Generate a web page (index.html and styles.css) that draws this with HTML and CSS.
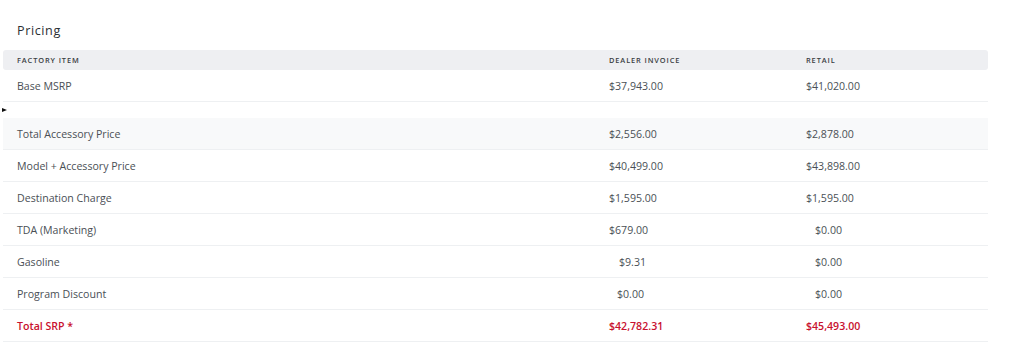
FILE: index.html
```html
<!DOCTYPE html>
<html>
<head>
<meta charset="utf-8">
<link rel="stylesheet" href="styles.css">
</head>
<body>
<section class="pricing">
  <h2 class="title">Pricing</h2>
  <div class="table">
    <div class="row head">
      <div>FACTORY ITEM</div>
      <div>DEALER INVOICE</div>
      <div>RETAIL</div>
    </div>
    <div class="row">
      <div>Base MSRP</div>
      <div>$37,943.00</div>
      <div>$41,020.00</div>
    </div>
    <div class="toggle"><span class="marker"></span></div>
    <div class="row shaded">
      <div>Total Accessory Price</div>
      <div>$2,556.00</div>
      <div>$2,878.00</div>
    </div>
    <div class="row">
      <div>Model + Accessory Price</div>
      <div>$40,499.00</div>
      <div>$43,898.00</div>
    </div>
    <div class="row">
      <div>Destination Charge</div>
      <div>$1,595.00</div>
      <div>$1,595.00</div>
    </div>
    <div class="row">
      <div>TDA (Marketing)</div>
      <div>$679.00</div>
      <div class="pad-r">$0.00</div>
    </div>
    <div class="row">
      <div>Gasoline</div>
      <div class="pad-d">$9.31</div>
      <div class="pad-r">$0.00</div>
    </div>
    <div class="row">
      <div>Program Discount</div>
      <div class="pad-d2">$0.00</div>
      <div class="pad-r">$0.00</div>
    </div>
    <div class="row total">
      <div>Total SRP *</div>
      <div>$42,782.31</div>
      <div>$45,493.00</div>
    </div>
  </div>
</section>
</body>
</html>
```
FILE: styles.css
```css
html, body {
  margin: 0;
  padding: 0;
  background: #ffffff;
}
body {
  font-family: "Open Sans", "Noto Sans", sans-serif;
  color: #4a4f55;
}
.pricing {
  padding: 22px 0 0 3px;
  width: 985px;
}
.title {
  margin: 0 0 11px 14px;
  font-size: 12.6px;
  font-weight: 500;
  letter-spacing: 0.6px;
  color: #2b2f33;
  line-height: 17px;
}
.row {
  display: grid;
  grid-template-columns: 606px 197px 1fr;
  align-items: center;
  height: 32px;
  box-sizing: border-box;
  border-bottom: 1px solid #eef0f2;
  font-size: 10.6px;
  font-weight: 500;
}
.row > div:first-child {
  padding-left: 14px;
}
.row.head {
  height: 20px;
  background: #eeeff2;
  border-radius: 3px;
  border-bottom: none;
  font-size: 7.4px;
  font-weight: 600;
  letter-spacing: 0.9px;
  color: #3a3e43;
}
.row.shaded {
  background: #f8f9fa;
}
.toggle {
  height: 16px;
  display: flex;
  align-items: center;
  margin-left: -1px;
}
.marker {
  width: 0;
  height: 0;
  border-top: 2.5px solid transparent;
  border-bottom: 2.5px solid transparent;
  border-left: 5px solid #111;
}
.pad-r {
  padding-left: 9px;
}
.pad-d {
  padding-left: 10px;
}
.pad-d2 {
  padding-left: 8px;
}
.row.total {
  color: #c8102e;
  font-weight: 600;
}
```
